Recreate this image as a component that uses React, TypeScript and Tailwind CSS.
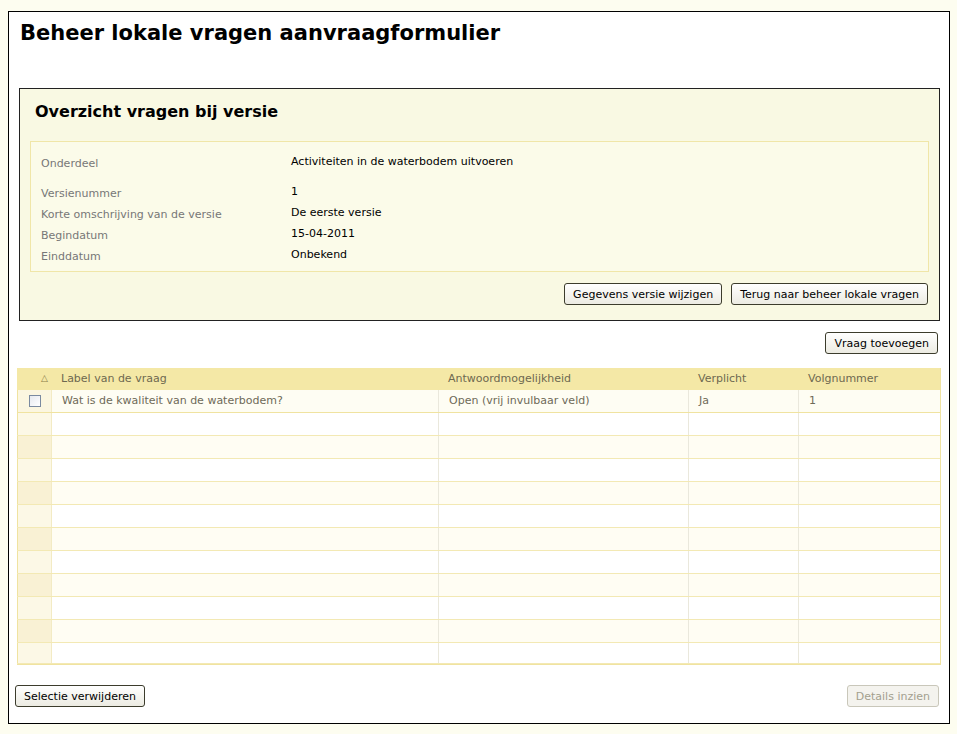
import React from "react";

const font = { fontFamily: '"DejaVu Sans", Verdana, sans-serif' };

function XpButton({ label, disabled = false }: { label: string; disabled?: boolean }) {
  return (
    <button
      className={`h-[22px] px-[8px] rounded-[3px] border text-[11px] leading-none ${
        disabled
          ? "border-[#c9c7ba] bg-[#f4f3ee] text-[#a3a08f]"
          : "border-[#3c3c2c] bg-gradient-to-b from-[#ffffff] to-[#ecebe2] text-black"
      }`}
    >
      {label}
    </button>
  );
}

const details = [
  { label: "Onderdeel", value: "Activiteiten in de waterbodem uitvoeren", gap: true },
  { label: "Versienummer", value: "1" },
  { label: "Korte omschrijving van de versie", value: "De eerste versie" },
  { label: "Begindatum", value: "15-04-2011" },
  { label: "Einddatum", value: "Onbekend" },
];

export default function App() {
  const emptyRows = Array.from({ length: 11 });

  return (
    <div className="min-h-[734px] bg-[#fdfdf0] pt-[11px] pl-[8px]" style={font}>
      <div className="w-[942px] h-[713px] border border-black bg-white flex flex-col">
        <h1 className="text-[21px] font-bold text-black pl-[11px] pt-[5px] leading-[32px]">
          Beheer lokale vragen aanvraagformulier
        </h1>

        {/* versie overzicht */}
        <div className="mt-[39px] ml-[10px] w-[921px] h-[233px] border border-[#222] bg-[#f9f9e3] flex flex-col">
          <h2 className="text-[16px] font-bold pl-[15px] pt-[11px] leading-[24px]">
            Overzicht vragen bij versie
          </h2>
          <div className="mt-[17px] ml-[10px] w-[899px] h-[131px] border border-[#f0e6a8] bg-[#fbfbe9] pl-[10px] pt-[12px] text-[11px]">
            {details.map((d) => (
              <div
                key={d.label}
                className={`flex h-[21px] items-start ${d.gap ? "mb-[9px]" : ""}`}
              >
                <span className="w-[250px] text-[#777] pt-[2px]">{d.label}</span>
                <span className="text-black">{d.value}</span>
              </div>
            ))}
          </div>
          <div className="flex justify-end gap-[9px] mt-[11px] pr-[11px]">
            <XpButton label="Gegevens versie wijzigen" />
            <XpButton label="Terug naar beheer lokale vragen" />
          </div>
        </div>

        <div className="flex justify-end mt-[11px] pr-[11px]">
          <XpButton label="Vraag toevoegen" />
        </div>

        {/* vragen tabel */}
        <div className="mt-[14px] ml-[8px] w-[924px] border-b border-r border-[#f0e3a0] text-[11px]">
          <div className="flex h-[22px] bg-[#f4e8a6] text-[#6e6850]">
            <div className="w-[34px] flex items-center justify-end pr-[3px] text-[9px] text-[#8a7e48]">△</div>
            <div className="w-[387px] flex items-center pl-[10px]">Label van de vraag</div>
            <div className="w-[250px] flex items-center pl-[10px]">Antwoordmogelijkheid</div>
            <div className="w-[110px] flex items-center pl-[10px]">Verplicht</div>
            <div className="flex-1 flex items-center pl-[10px]">Volgnummer</div>
          </div>
          <div className="flex h-[23px] bg-[#fefdf3] text-[#6e6a58] border-b border-[#f0e3a0]">
            <div className="w-[34px] flex items-center justify-center border-l border-[#f0e3a0] bg-[#fbf6e0]">
              <span className="w-[12px] h-[12px] border border-[#7a8aa0] bg-gradient-to-br from-[#e6e9ef] to-[#ffffff]" />
            </div>
            <div className="w-[387px] flex items-center pl-[10px] border-l border-[#f3ebc4]">
              Wat is de kwaliteit van de waterbodem?
            </div>
            <div className="w-[250px] flex items-center pl-[10px] border-l border-[#eae8dc]">
              Open (vrij invulbaar veld)
            </div>
            <div className="w-[110px] flex items-center pl-[10px] border-l border-[#eae8dc]">Ja</div>
            <div className="flex-1 flex items-center pl-[10px] border-l border-[#eae8dc]">1</div>
          </div>
          {emptyRows.map((_, i) => (
            <div
              key={i}
              className={`flex border-b border-[#f3e9b4] ${
                i % 2 === 0 ? "bg-white" : "bg-[#fffdf3]"
              } ${i === 10 ? "h-[21px]" : "h-[23px]"}`}
            >
              <div
                className={`w-[34px] border-l border-[#f0e3a0] ${
                  i % 2 === 0 ? "bg-[#fcf8e6]" : "bg-[#f9f1d4]"
                }`}
              />
              <div className="w-[387px] border-l border-[#f3ebc4]" />
              <div className="w-[250px] border-l border-[#eae8dc]" />
              <div className="w-[110px] border-l border-[#eae8dc]" />
              <div className="flex-1 border-l border-[#eae8dc]" />
            </div>
          ))}
        </div>

        <div className="flex justify-between mt-[20px] pl-[6px] pr-[10px]">
          <XpButton label="Selectie verwijderen" />
          <XpButton label="Details inzien" disabled />
        </div>
      </div>
    </div>
  );
}
